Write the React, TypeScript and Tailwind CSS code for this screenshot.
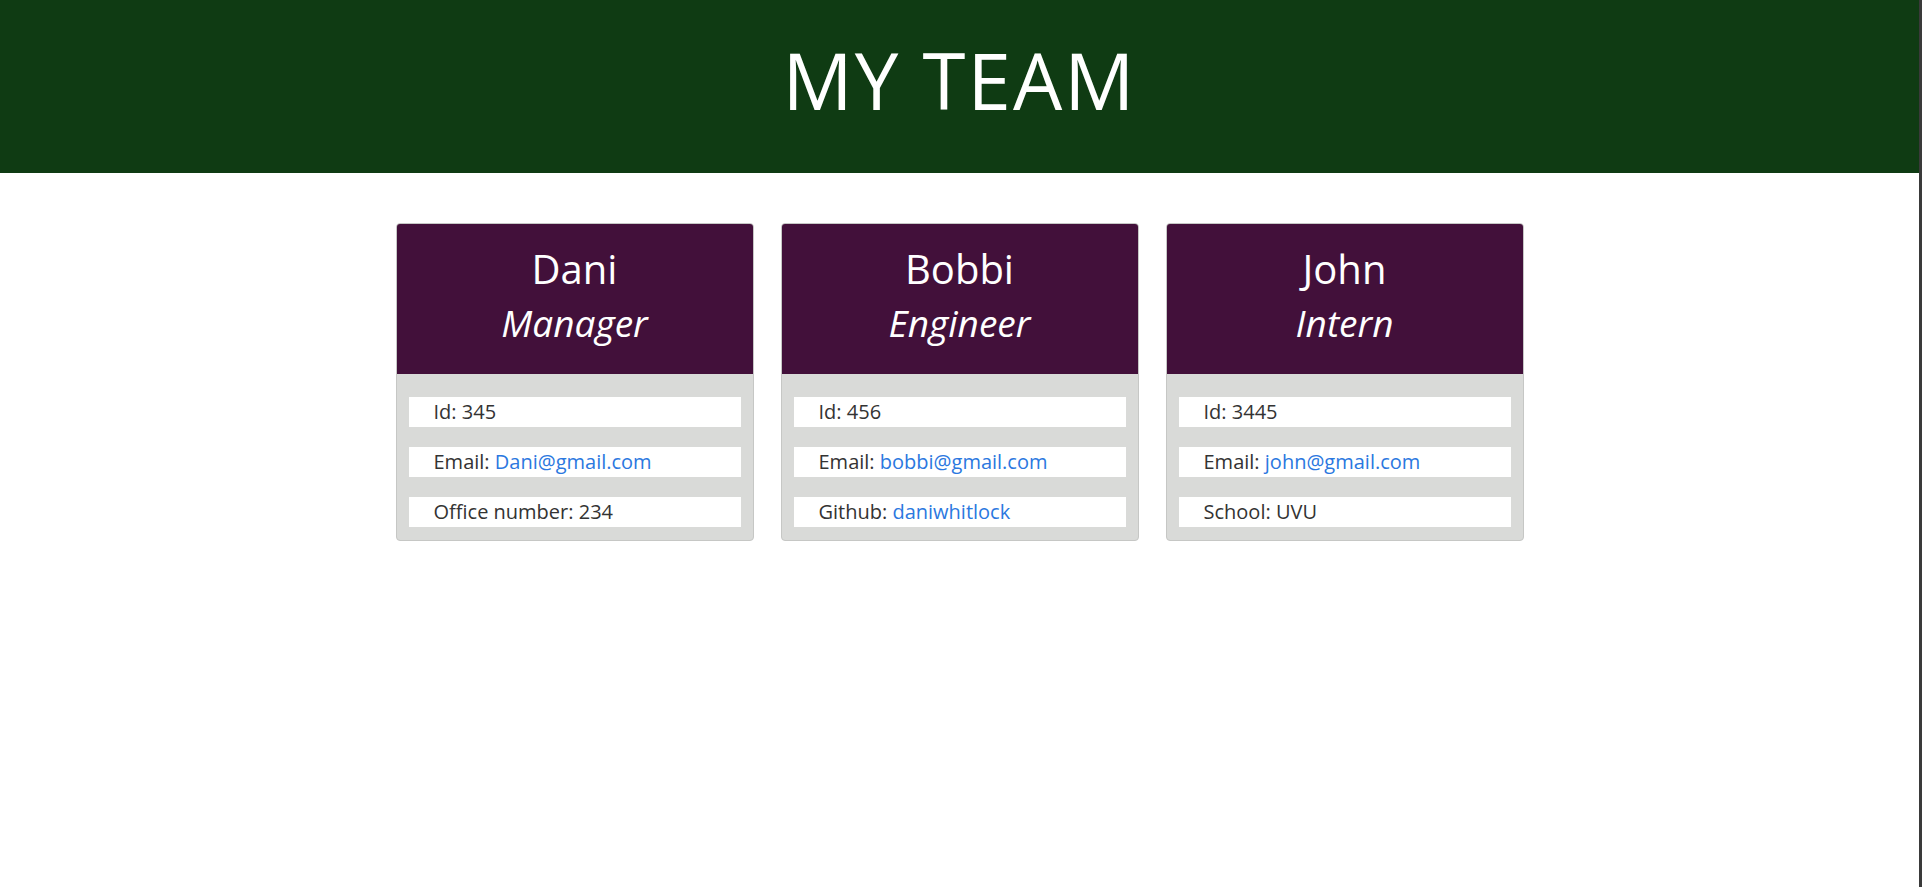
import React from "react";

type Item = { label: string; value: string; link?: boolean };
type Member = { name: string; role: string; items: Item[] };

const team: Member[] = [
  {
    name: "Dani",
    role: "Manager",
    items: [
      { label: "Id: ", value: "345" },
      { label: "Email: ", value: "Dani@gmail.com", link: true },
      { label: "Office number: ", value: "234" },
    ],
  },
  {
    name: "Bobbi",
    role: "Engineer",
    items: [
      { label: "Id: ", value: "456" },
      { label: "Email: ", value: "bobbi@gmail.com", link: true },
      { label: "Github: ", value: "daniwhitlock", link: true },
    ],
  },
  {
    name: "John",
    role: "Intern",
    items: [
      { label: "Id: ", value: "3445" },
      { label: "Email: ", value: "john@gmail.com", link: true },
      { label: "School: ", value: "UVU" },
    ],
  },
];

function Card({ m }: { m: Member }) {
  return (
    <div className="w-[358px] border border-[#c6c7c5] rounded-[4px] overflow-hidden bg-[#d9dad8]">
      <div className="h-[150px] bg-[#42103a] text-white flex flex-col items-center pt-[21px]">
        <div className="text-[40px] leading-[48px]">{m.name}</div>
        <div className="text-[37px] leading-[44px] italic mt-[8px]">{m.role}</div>
      </div>
      <div className="flex flex-col gap-[20px] pt-[23px] pb-[13px] px-[12px]">
        {m.items.map((it, i) => (
          <div key={i} className="h-[30px] bg-white pl-[25px] text-[20px] leading-[30px] text-[#333333] whitespace-nowrap">
            {it.label}
            {it.link ? (
              <a href="#" className="text-[#2b78e0]">{it.value}</a>
            ) : (
              it.value
            )}
          </div>
        ))}
      </div>
    </div>
  );
}

export default function App() {
  return (
    <div
      className="flex min-h-[887px] bg-white"
      style={{ fontFamily: '"Open Sans", "Noto Sans", sans-serif' }}
    >
      <div className="flex-1 flex flex-col">
        <header className="h-[173px] bg-[#0f3b13] text-white text-center pt-[41px]">
          <h1 className="text-[78px] leading-none tracking-[2px]">MY TEAM</h1>
        </header>
        <main className="flex justify-center gap-[27px] mt-[50px] items-start">
          {team.map((m) => (
            <Card key={m.name} m={m} />
          ))}
        </main>
      </div>
      <div className="w-[3px] bg-[#3a3a3a]" />
    </div>
  );
}
